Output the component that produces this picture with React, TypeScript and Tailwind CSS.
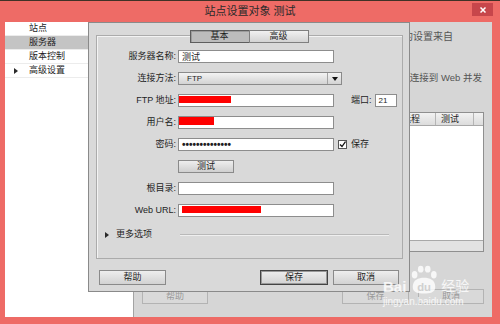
function Field({ label, children }: { label: string; children: React.ReactNode }) {
  return (
    <div className="flex items-center h-[13px]">
      <div className="w-[79px] text-right text-[9px] leading-none whitespace-nowrap">{label}</div>
      <div className="ml-[2px] flex items-center">{children}</div>
    </div>
  );
}

function TextBox({ w, children }: { w: string; children?: React.ReactNode }) {
  return (
    <div className={`${w} h-[13px] bg-white border border-[#8d8d8d] flex items-start overflow-hidden`}>
      {children}
    </div>
  );
}

function Tri({ className }: { className?: string }) {
  return (
    <svg width="4" height="6" viewBox="0 0 4 6" className={className}>
      <path d="M0 0 L4 3 L0 6 Z" fill="#2a2a2a" />
    </svg>
  );
}

export default function App() {
  const items = ["站点", "服务器", "版本控制", "高级设置"];
  return (
    <div className="relative w-[500px] h-[324px] overflow-hidden bg-[#ee6b66] flex flex-col font-['Liberation_Sans','Noto_Sans_CJK_SC',sans-serif] text-[#1e1e1e]">
      <div className="h-[1px] bg-[#3f3226]" />

      {/* title bar */}
      <div className="h-[21px] grid grid-cols-[1fr_auto_1fr]">
        <div />
        <div className="self-center text-[11px] leading-none text-[#2a2a2a]">站点设置对象 测试</div>
        <div className="flex justify-end items-start pr-[7px] pt-[2px]">
          <div className="w-[21px] h-[13px] bg-[#c7464b] flex items-center justify-center">
            <svg width="6" height="6" viewBox="0 0 6 6">
              <path d="M0.5 0.5 L5.5 5.5 M5.5 0.5 L0.5 5.5" stroke="#fff" strokeWidth="1.5" />
            </svg>
          </div>
        </div>
      </div>

      {/* back window body */}
      <div className="flex-1 flex ml-[5px] mr-[8px] mb-[7px] min-h-0">
        <div className="w-[128px] bg-white flex flex-col text-[9px]">
          {items.map((t, i) => (
            <div
              key={t}
              className={`h-[14px] flex items-center border-b border-[#ececec] ${i === 1 ? "bg-[#c4c4c4]" : ""} ${i === 3 ? "pl-[9px]" : "pl-[24px]"}`}
            >
              {i === 3 && <Tri className="mr-[11px]" />}
              {t}
            </div>
          ))}
        </div>

        <div className="flex-1 flex flex-col bg-[#d6d6d6] border-l border-[#a3a3a3] text-[#555] min-w-0">
          <div className="mt-[9px] pr-[39px] text-right text-[10px] leading-[11px] whitespace-nowrap">此对话框的设置来自</div>
          <div className="mt-[30px] pr-[10px] text-right text-[9.5px] leading-[11px] whitespace-nowrap">如果要连接到 Web 并发</div>

          <div className="mt-[29px] ml-[12px] mr-[8px] h-[140px] flex flex-col border border-[#8f8f8f] bg-white">
            <div className="h-[13px] flex bg-linear-to-b from-[#f2f2f2] to-[#dcdcdc] border-b border-[#a8a8a8] text-[9px] text-[#222] leading-none">
              <div className="flex-1 flex items-center pl-[5px] border-r border-[#b5b5b5]">名称</div>
              <div className="w-[39px] flex items-center pl-[5px] border-r border-[#b5b5b5]">远程</div>
              <div className="w-[38px] flex items-center pl-[5px] border-r border-[#b5b5b5]">测试</div>
              <div className="w-[9px]" />
            </div>
            <div className="flex-1 bg-white" />
            <div className="h-[11px] bg-[#e2e2e2] border-t border-[#a8a8a8]" />
          </div>

          <div className="mt-[37px] flex pl-[8px] pr-[8px] text-[9px]">
            <div className="w-[66px] h-[15px] border border-[#b3b3b3] bg-[#d9d9d9] text-[#9a9a9a] flex items-center justify-center">帮助</div>
            <div className="ml-auto w-[67px] h-[15px] border border-[#b3b3b3] bg-[#d9d9d9] text-[#9a9a9a] flex items-center justify-center">保存</div>
            <div className="ml-[9px] w-[66px] h-[15px] border border-[#b3b3b3] bg-[#d9d9d9] text-[#9a9a9a] flex items-center justify-center">取消</div>
          </div>
        </div>
      </div>

      {/* front dialog */}
      <div className="absolute left-[88px] top-[22px] w-[322px] h-[270px] bg-[#d9d9d9] border border-[#8a8a8a] flex flex-col">
        <div className="mt-[7px] flex justify-center relative z-10 text-[9px] leading-none">
          <div className="w-[60px] h-[13px] border border-[#5e5e5e] bg-[#bcbcbc] shadow-[inset_1px_1px_0_#9c9c9c] flex items-center justify-center">基本</div>
          <div className="-ml-[1px] w-[60px] h-[13px] border border-[#7f7f7f] bg-linear-to-b from-[#f1f1f1] to-[#d3d3d3] flex items-center justify-center">高级</div>
        </div>

        <div className="-mt-[8px] ml-[7px] mr-[6px] h-[224px] border border-[#ababab] shadow-[inset_1px_1px_0_#f3f3f3] flex flex-col pt-[14px] gap-[9px]">
          <Field label="服务器名称:">
            <TextBox w="w-[156px]">
              <span className="ml-[3px] mt-[1px] text-[9px] leading-[10px]">测试</span>
            </TextBox>
          </Field>
          <Field label="连接方法:">
            <div className="w-[164px] h-[13px] border border-[#8a8a8a] bg-linear-to-b from-[#f3f3f3] to-[#d3d3d3] flex items-center">
              <span className="flex-1 pl-[8px] text-[8px] leading-none">FTP</span>
              <div className="w-[14px] h-full border-l border-[#a3a3a3] flex items-center justify-center">
                <svg width="6" height="4" viewBox="0 0 6 4">
                  <path d="M0 0 L6 0 L3 4 Z" fill="#111" />
                </svg>
              </div>
            </div>
          </Field>
          <Field label="FTP 地址:">
            <TextBox w="w-[156px]">
              <div className="mt-[1px] w-[52px] h-[7px] bg-[#ff0000]" />
            </TextBox>
            <span className="ml-[17px] text-[9px] leading-none">端口:</span>
            <div className="ml-[3px] w-[22px] h-[13px] bg-white border border-[#8d8d8d] text-[8px] leading-none flex items-center pl-[3px]">21</div>
          </Field>
          <Field label="用户名:">
            <TextBox w="w-[156px]">
              <div className="w-[35px] h-[8px] bg-[#ff0000]" />
            </TextBox>
          </Field>
          <Field label="密码:">
            <TextBox w="w-[156px]">
              <span className="ml-[3px] text-[10px] leading-[11px] font-bold">••••••••••••••</span>
            </TextBox>
            <div className="ml-[4px] w-[9px] h-[9px] bg-white border border-[#555] flex items-center justify-center">
              <svg width="7" height="7" viewBox="0 0 7 7">
                <path d="M1 3.5 L3 5.5 L6.5 0.5" stroke="#111" strokeWidth="1.3" fill="none" />
              </svg>
            </div>
            <span className="ml-[4px] text-[9px] leading-none">保存</span>
          </Field>
          <Field label="">
            <div className="w-[56px] h-[13px] border border-[#8a8a8a] bg-linear-to-b from-[#eeeeee] to-[#cfcfcf] text-[9px] leading-none flex items-center justify-center">测试</div>
          </Field>
          <Field label="根目录:">
            <TextBox w="w-[156px]" />
          </Field>
          <Field label="Web URL:">
            <TextBox w="w-[156px]">
              <div className="ml-[3px] mt-[1px] w-[79px] h-[7px] bg-[#ff0000]" />
            </TextBox>
          </Field>
          <div className="mt-[2px] h-[13px] flex items-center pl-[8px]">
            <Tri />
            <span className="ml-[7px] text-[9px] leading-none">更多选项</span>
            <div className="flex-1 ml-[28px] mr-[13px] h-[2px] border-t border-[#b9b9b9] border-b border-b-[#efefef]" />
          </div>
        </div>

        <div className="mt-[11px] flex px-[10px] text-[9px] leading-none">
          <div className="w-[67px] h-[15px] border border-[#8a8a8a] bg-linear-to-b from-[#eeeeee] to-[#d2d2d2] flex items-center justify-center">帮助</div>
          <div className="ml-auto w-[68px] h-[15px] border border-[#444] shadow-[inset_0_0_0_1px_#9a9a9a] bg-linear-to-b from-[#eeeeee] to-[#d2d2d2] flex items-center justify-center">保存</div>
          <div className="ml-[5px] w-[66px] h-[15px] border border-[#8a8a8a] bg-linear-to-b from-[#eeeeee] to-[#d2d2d2] flex items-center justify-center">取消</div>
        </div>
      </div>

      {/* watermark */}
      <div className="absolute left-[383px] top-[264px] flex flex-col text-white/80 pointer-events-none">
        <div className="flex items-end h-[30px]">
          <span className="text-[15px] font-bold leading-none">Bai</span>
          <svg width="30" height="29" viewBox="0 0 32 30" className="ml-[3px]">
            <g fill="rgba(255,255,255,0.8)">
              <ellipse cx="6" cy="10" rx="3" ry="4" />
              <ellipse cx="12.5" cy="4" rx="3" ry="3.6" />
              <ellipse cx="20" cy="4" rx="3" ry="3.6" />
              <ellipse cx="26.5" cy="10" rx="3" ry="4" />
              <path d="M4 23 C4 15 10 13 16 13 C22 13 28 15 28 23 C28 29 22 30 16 30 C10 30 4 29 4 23 Z" />
            </g>
            <text x="16" y="27" textAnchor="middle" fontSize="12" fontWeight="bold" fill="#d0d0d0" fontFamily="Liberation Sans, sans-serif">du</text>
          </svg>
          <span className="ml-[2px] mb-[1px] text-[14px] leading-none">经验</span>
        </div>
        <span className="mt-[3px] text-[10px] leading-none">jingyan.baidu.com</span>
      </div>
    </div>
  );
}
